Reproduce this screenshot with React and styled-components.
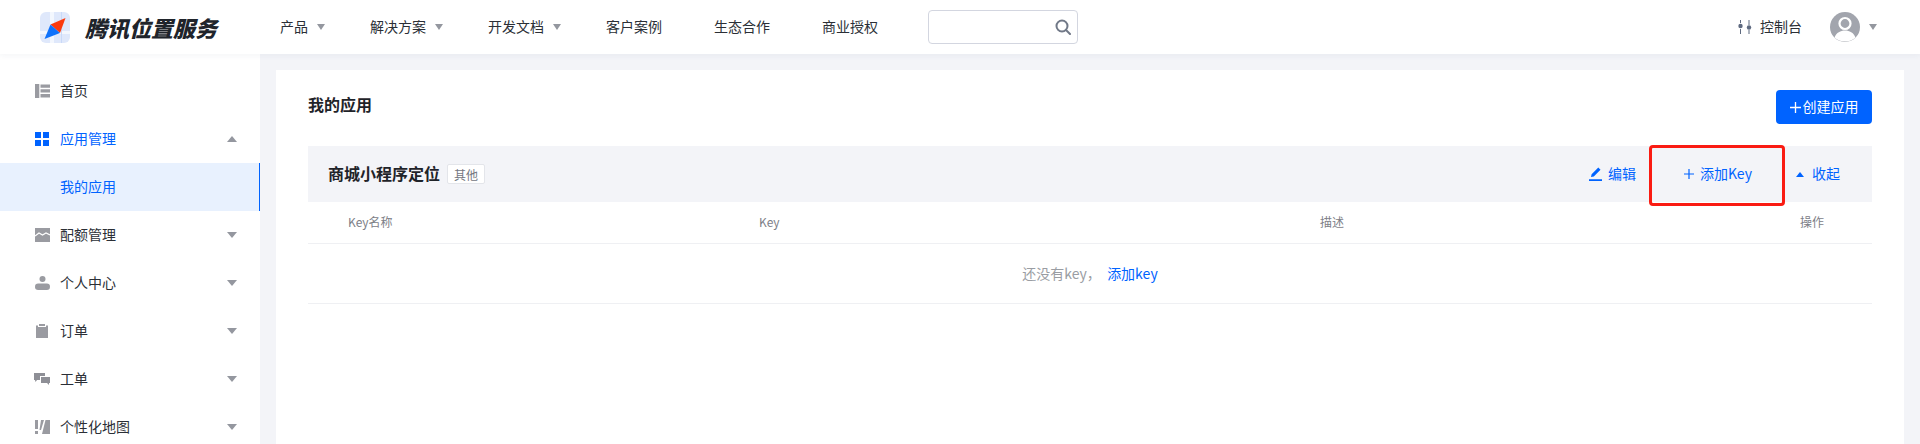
import styled, { createGlobalStyle } from 'styled-components';

const GlobalStyle = createGlobalStyle`
  html, body {
    margin: 0;
    padding: 0;
    height: 100%;
    overflow: hidden;
    background: #f3f4f8;
    font-family: "Noto Sans CJK SC", "Liberation Sans", sans-serif;
    font-size: 14px;
    color: #1f2329;
  }
`;

const Page = styled.div`
  display: flex;
  flex-direction: column;
  height: 444px;
  overflow: hidden;
`;

// Noto sits a little low compared with the reference font, so nudge labels up
const Label = styled.span`
  margin-bottom: 2px;
`;

// Top bar
const Header = styled.header`
  position: relative;
  z-index: 2;
  display: flex;
  align-items: center;
  flex: 0 0 54px;
  background: #fff;
  box-shadow: 0 2px 6px rgba(30, 50, 90, 0.05);
`;

const Brand = styled.div`
  display: flex;
  align-items: center;
  width: 254px;
  padding-left: 40px;
  box-sizing: border-box;
`;

const BrandName = styled.span`
  margin-left: 15px;
  font-size: 22px;
  line-height: 30px;
  font-weight: 900;
  font-style: italic;
  color: #20242b;
  white-space: nowrap;
`;

const Nav = styled.nav`
  display: flex;
  align-items: center;
`;

const NavItem = styled.a`
  display: flex;
  align-items: center;
  padding: ${(p) => (p.$menu ? '0 19px 0 26px' : '0 26px')};
  color: #2b2f36;
  white-space: nowrap;
`;

const Arrow = styled.i`
  display: inline-block;
  width: 0;
  height: 0;
  margin-left: ${(p) => p.$gap || 0}px;
  border-left: ${(p) => p.$size || 5}px solid transparent;
  border-right: ${(p) => p.$size || 5}px solid transparent;
  border-${(p) => (p.$up ? 'bottom' : 'top')}: 6px solid #94979f;
`;

const Search = styled.div`
  display: flex;
  align-items: center;
  justify-content: flex-end;
  width: 150px;
  height: 34px;
  margin-left: 24px;
  padding-right: 6px;
  box-sizing: border-box;
  border: 1px solid #d3d6e0;
  border-radius: 4px;
  background: #fff;
`;

const HeaderRight = styled.div`
  display: flex;
  align-items: center;
  margin-left: auto;
  padding-right: 43px;
`;

const Console = styled.a`
  display: flex;
  align-items: center;
  gap: 8px;
  margin-right: 28px;
  color: #2b2f36;
`;

// Sidebar + content
const Body = styled.div`
  display: flex;
  flex: 1;
  min-height: 0;
`;

const Sidebar = styled.aside`
  flex: 0 0 260px;
  padding-top: 13px;
  box-sizing: border-box;
  background: #fff;
`;

const MenuItem = styled.div`
  display: flex;
  align-items: center;
  gap: 11px;
  height: 48px;
  padding: 0 23px 0 35px;
  color: ${(p) => (p.$open ? '#0063ff' : '#2b2f36')};

  & > i {
    margin-left: auto;
  }
`;

// icons differ a little in width, the label still has to start at the same x
const IconSlot = styled.span`
  display: flex;
  flex: 0 0 14px;
  min-width: 0;
  justify-content: center;

  & > svg {
    flex: none;
  }
`;

const SubItem = styled.div`
  display: flex;
  align-items: center;
  height: 48px;
  padding-left: 60px;
  color: #0063ff;
  background: #e8f1fe;
  border-right: 1px solid #0063ff;
`;

const Main = styled.main`
  flex: 1;
  padding: 16px 16px 0;
  min-width: 0;
`;

const Card = styled.section`
  height: 100%;
  padding: 20px 32px 0;
  box-sizing: border-box;
  background: #fff;
`;

const CardHead = styled.div`
  display: flex;
  align-items: flex-start;
  justify-content: space-between;
  height: 34px;
  margin-bottom: 22px;
`;

const CardTitle = styled.h2`
  margin: 0;
  font-size: 16px;
  font-weight: 700;
  line-height: 28px;
  color: #1f2329;
`;

const PrimaryButton = styled.button`
  display: flex;
  align-items: center;
  justify-content: center;
  gap: 2px;
  width: 96px;
  height: 34px;
  padding: 0;
  border: 0;
  border-radius: 4px;
  background: #0063ff;
  color: #fff;
  font: inherit;
`;

const AppRow = styled.div`
  display: flex;
  align-items: center;
  height: 56px;
  padding: 0 32px 0 20px;
  background: #f3f4f8;
`;

const AppName = styled.span`
  margin-bottom: 2px;
  font-size: 16px;
  font-weight: 700;
  color: #1f2329;
`;

const Tag = styled.span`
  display: flex;
  align-items: center;
  justify-content: center;
  width: 38px;
  height: 20px;
  margin-left: 7px;
  box-sizing: border-box;
  border: 1px solid #e3e5ea;
  border-radius: 2px;
  background: #fff;
  font-size: 12px;
  color: #73777f;
`;

const Actions = styled.div`
  display: flex;
  align-items: center;
  margin-left: auto;
`;

const Action = styled.a`
  position: relative;
  display: flex;
  align-items: center;
  gap: ${(p) => p.$gap || 6}px;
  height: 22px;
  margin-left: ${(p) => p.$left || 0}px;
  color: #0063ff;
`;

// red annotation drawn over the screenshot
const Highlight = styled.span`
  position: absolute;
  top: -18px;
  bottom: -21px;
  left: -35px;
  right: -33px;
  border: 3px solid #fa1b12;
  border-radius: 4px;
`;

const TableHead = styled.div`
  display: grid;
  grid-template-columns: 411px 561px 480px 1fr;
  align-items: center;
  height: 42px;
  padding: 0 0 2px 40px;
  box-sizing: border-box;
  border-bottom: 1px solid #eff0f3;
  font-size: 12px;
  color: #7d8087;
`;

const EmptyRow = styled.div`
  display: flex;
  align-items: center;
  justify-content: center;
  height: 60px;
  padding-bottom: 2px;
  box-sizing: border-box;
  border-bottom: 1px solid #eff0f3;
  color: #9a9da3;
`;

const EmptyLink = styled.a`
  color: #0063ff;
`;

const Logo = () => (
  <svg width="30" height="31" viewBox="0 0 30 31">
    <rect width="30" height="31" rx="6" fill="#dfe8fb" />
    <path d="M10 0h4v31h-4zM0 19h30v3H0z" fill="#f3f7fe" />
    <path d="M21 0h1v31h-1z" fill="#c9d9f8" />
    <path d="M25.500 6 20 21 10.500 12.500z" fill="#fb3a0d" />
    <path d="M10.500 12.500 20 21 4.500 27z" fill="#0f72fb" />
  </svg>
);

const SearchIcon = () => (
  <svg width="16" height="16" viewBox="0 0 16 16" fill="none" stroke="#707887" strokeWidth="2">
    <circle cx="7" cy="7" r="5.500" />
    <path d="m11 11 4 4" strokeLinecap="round" />
  </svg>
);

const SlidersIcon = () => (
  <svg width="14" height="14" viewBox="0 0 14 14" fill="#5e6a80">
    <path d="M2 0h1v3H2zM2 9h1v5H2zM10.500 0h1v5h-1zM10.500 10h1v4h-1z" />
    <circle cx="2.500" cy="6" r="2.200" />
    <circle cx="11" cy="7.500" r="2.200" />
  </svg>
);

const Avatar = () => (
  <svg width="30" height="30" viewBox="0 0 30 30">
    <circle cx="15" cy="15" r="15" fill="#a2a5ad" />
    <circle cx="15" cy="11.500" r="5.500" fill="none" stroke="#fff" strokeWidth="2.200" />
    <path d="M4.500 25.500C6.500 20.500 10.500 18.500 15 18.500s8.500 2 10.500 7A14.800 14.800 0 0 1 15 29.500c-4 0-7.800-1.500-10.500-4z" fill="#fff" />
  </svg>
);

const HomeIcon = () => (
  <svg width="15" height="14" viewBox="0 0 15 14" fill="#9a9ba1">
    <path d="M0 0h4.300v14H0zM5.500 0.500H15v3.300H5.500zM5.500 5.300H15v3.300H5.500zM5.500 10.100H15v3.400H5.500z" />
  </svg>
);

const AppsIcon = () => (
  <svg width="14" height="14" viewBox="0 0 14 14" fill="#0063ff">
    <path d="M0 0h6v6H0zM8 0h6v6H8zM0 8h6v6H0zM8 8h6v6H8z" />
  </svg>
);

const QuotaIcon = () => (
  <svg width="15" height="14" viewBox="0 0 15 14">
    <rect width="15" height="14" fill="#9a9ba1" />
    <path d="m0 8 4-3 3.500 2 3.500-2 4 2" fill="none" stroke="#fff" strokeWidth="1.200" />
  </svg>
);

const UserIcon = () => (
  <svg width="15" height="14" viewBox="0 0 15 14" fill="#9a9ba1">
    <circle cx="7.500" cy="3" r="3" />
    <rect y="7.500" width="15" height="6.500" rx="3.200" />
  </svg>
);

const OrderIcon = () => (
  <svg width="14" height="14" viewBox="0 0 14 14" fill="#9a9ba1">
    <path d="M1 1.500h2V3h8V1.500h2V14H1zM4 0h6v2H4z" />
  </svg>
);

const TicketIcon = () => (
  <svg width="16" height="13" viewBox="0 0 16 13" fill="#8e8f96">
    <path d="M0 0h11v3H6v4H3L1.500 9 1 7H0z" />
    <path d="M7 4h9v6h-1v2l-2-2H7z" />
  </svg>
);

const MapIcon = () => (
  <svg width="15" height="14" viewBox="0 0 15 14" fill="#9a9ba1">
    <path d="M0 0h3v9H0zM0 11h3v3H0zM6 0h3L6 10H4.500zM10.500 0H15v14H7z" />
  </svg>
);

const EditIcon = () => (
  <svg width="14" height="14" viewBox="0 0 14 14" fill="#0063ff">
    <path d="M0 12.300h13V14H0zM2 10l.6-2.800L9.300 0.500l2.200 2.200L4.800 9.400z" />
  </svg>
);

const PlusIcon = ({ size = 10, color = '#0063ff' }) => (
  <svg width={size} height={size} viewBox="0 0 10 10" fill="none" stroke={color} strokeWidth="1.200">
    <path d="M5 0v10M0 5h10" />
  </svg>
);

const SmallUp = styled.i`
  width: 0;
  height: 0;
  border-left: 4px solid transparent;
  border-right: 4px solid transparent;
  border-bottom: 5px solid #0063ff;
`;

const menu = [
  { label: '配额管理', icon: <QuotaIcon /> },
  { label: '个人中心', icon: <UserIcon /> },
  { label: '订单', icon: <OrderIcon /> },
  { label: '工单', icon: <TicketIcon /> },
  { label: '个性化地图', icon: <MapIcon /> },
];

const App = () => (
  <Page>
    <GlobalStyle />
    <Header>
      <Brand>
        <Logo />
        <BrandName>腾讯位置服务</BrandName>
      </Brand>
      <Nav>
        <NavItem $menu><Label>产品</Label><Arrow $gap={9} $size={4} /></NavItem>
        <NavItem $menu><Label>解决方案</Label><Arrow $gap={9} $size={4} /></NavItem>
        <NavItem $menu><Label>开发文档</Label><Arrow $gap={9} $size={4} /></NavItem>
        <NavItem><Label>客户案例</Label></NavItem>
        <NavItem><Label>生态合作</Label></NavItem>
        <NavItem><Label>商业授权</Label></NavItem>
      </Nav>
      <Search><SearchIcon /></Search>
      <HeaderRight>
        <Console><SlidersIcon /><Label>控制台</Label></Console>
        <Avatar />
        <Arrow $gap={9} $size={4} />
      </HeaderRight>
    </Header>
    <Body>
      <Sidebar>
        <MenuItem><IconSlot><HomeIcon /></IconSlot><Label>首页</Label></MenuItem>
        <MenuItem $open><IconSlot><AppsIcon /></IconSlot><Label>应用管理</Label><Arrow $up /></MenuItem>
        <SubItem><Label>我的应用</Label></SubItem>
        {menu.map((item) => (
          <MenuItem key={item.label}><IconSlot>{item.icon}</IconSlot><Label>{item.label}</Label><Arrow /></MenuItem>
        ))}
      </Sidebar>
      <Main>
        <Card>
          <CardHead>
            <CardTitle>我的应用</CardTitle>
            <PrimaryButton><PlusIcon size={11} color="#fff" /><Label>创建应用</Label></PrimaryButton>
          </CardHead>
          <AppRow>
            <AppName>商城小程序定位</AppName>
            <Tag>其他</Tag>
            <Actions>
              <Action $gap={5}><EditIcon /><Label>编辑</Label></Action>
              <Action $left={48} $gap={6}><PlusIcon /><Label>添加Key</Label><Highlight /></Action>
              <Action $left={44} $gap={8}><SmallUp /><Label>收起</Label></Action>
            </Actions>
          </AppRow>
          <TableHead>
            <span>Key名称</span>
            <span>Key</span>
            <span>描述</span>
            <span>操作</span>
          </TableHead>
          <EmptyRow>
            还没有key，&nbsp;&nbsp;<EmptyLink>添加key</EmptyLink>
          </EmptyRow>
        </Card>
      </Main>
    </Body>
  </Page>
);

export default App;
